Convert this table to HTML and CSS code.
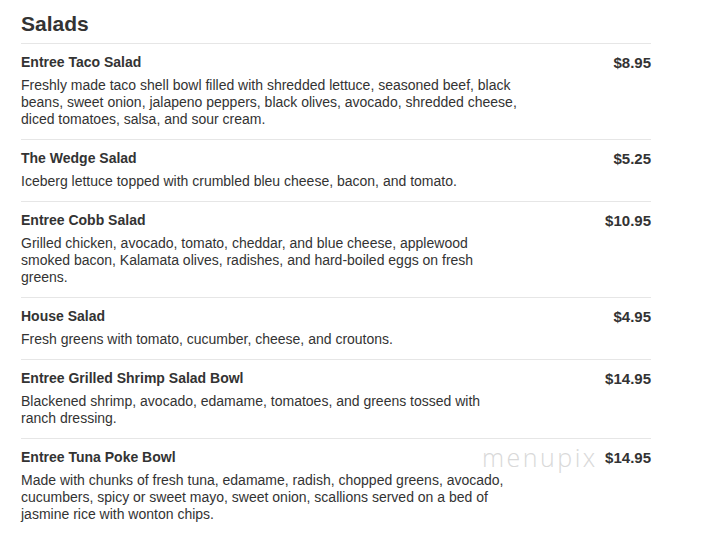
FILE: index.html
```html
<!DOCTYPE html>
<html>
<head>
<meta charset="utf-8">
<link rel="stylesheet" href="styles.css">
</head>
<body>
<div class="menu">
  <h2 class="section-title">Salads</h2>
  <div class="item">
    <div class="item-head"><span class="item-name">Entree Taco Salad</span><span class="item-price">$8.95</span></div>
    <p class="item-desc">Freshly made taco shell bowl filled with shredded lettuce, seasoned beef, black beans, sweet onion, jalapeno peppers, black olives, avocado, shredded cheese, diced tomatoes, salsa, and sour cream.</p>
  </div>
  <div class="item">
    <div class="item-head"><span class="item-name">The Wedge Salad</span><span class="item-price">$5.25</span></div>
    <p class="item-desc">Iceberg lettuce topped with crumbled bleu cheese, bacon, and tomato.</p>
  </div>
  <div class="item">
    <div class="item-head"><span class="item-name">Entree Cobb Salad</span><span class="item-price">$10.95</span></div>
    <p class="item-desc">Grilled chicken, avocado, tomato, cheddar, and blue cheese, applewood smoked bacon, Kalamata olives, radishes, and hard-boiled eggs on fresh greens.</p>
  </div>
  <div class="item">
    <div class="item-head"><span class="item-name">House Salad</span><span class="item-price">$4.95</span></div>
    <p class="item-desc">Fresh greens with tomato, cucumber, cheese, and croutons.</p>
  </div>
  <div class="item">
    <div class="item-head"><span class="item-name">Entree Grilled Shrimp Salad Bowl</span><span class="item-price">$14.95</span></div>
    <p class="item-desc">Blackened shrimp, avocado, edamame, tomatoes, and greens tossed with ranch dressing.</p>
  </div>
  <div class="item">
    <div class="item-head"><span class="item-name">Entree Tuna Poke Bowl</span><span class="item-price">$14.95</span></div>
    <p class="item-desc">Made with chunks of fresh tuna, edamame, radish, chopped greens, avocado, cucumbers, spicy or sweet mayo, sweet onion, scallions served on a bed of jasmine rice with wonton chips.</p>
    <span class="watermark">menupix</span>
  </div>
</div>
</body>
</html>
```
FILE: styles.css
```css
html, body {
  margin: 0;
  padding: 0;
  background: #fff;
}
body {
  font-family: "Liberation Sans", Arial, sans-serif;
  color: #333;
}
.menu {
  width: 630px;
  margin-left: 21px;
}
.section-title {
  margin: 0;
  height: 43px;
  box-sizing: border-box;
  padding-top: 11px;
  font-size: 21px;
  line-height: 26px;
  font-weight: bold;
  color: #333;
}
.item {
  position: relative;
  border-top: 1px solid #e6e6e6;
  padding: 10px 0 11px;
}
.item-head {
  display: flex;
  justify-content: space-between;
  align-items: center;
  height: 17px;
}
.item-name {
  font-size: 14px;
  font-weight: bold;
  line-height: 17px;
}
.item-price {
  font-size: 15px;
  font-weight: bold;
  line-height: 17px;
}
.item-desc {
  margin: 6px 0 0;
  width: 498px;
  font-size: 14px;
  line-height: 17px;
}
.watermark {
  position: absolute;
  left: 461px;
  top: 3px;
  font-family: "Open Sans", sans-serif;
  font-weight: 300;
  font-size: 25px;
  line-height: 30px;
  color: #d9d9d9;
  letter-spacing: 2.5px;
}
```
